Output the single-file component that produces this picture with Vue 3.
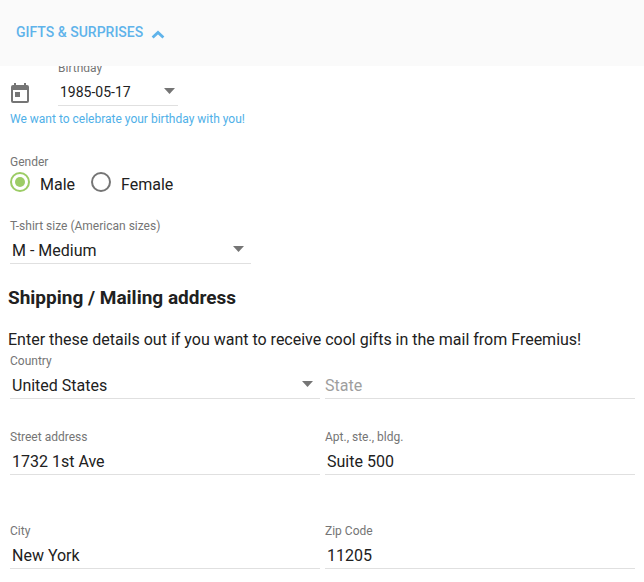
<script setup>
import { ref } from 'vue'

const open = ref(true)
const birthday = ref('1985-05-17')
const gender = ref('male')
const size = ref('M')
const country = ref('US')
const state = ref('')
const street = ref('1732 1st Ave')
const apt = ref('Suite 500')
const city = ref('New York')
const zip = ref('11205')

const genders = [
  { value: 'male', label: 'Male' },
  { value: 'female', label: 'Female' },
]
</script>

<template>
  <main class="page">
    <header class="header">
      <button class="toggle" type="button" :aria-expanded="open" @click="open = !open">
        <span>GIFTS &amp; SURPRISES</span>
        <svg class="chevron" viewBox="0 0 14 9" aria-hidden="true">
          <path d="M1.600 7.600 7 2.400 12.400 7.600" fill="none" stroke="currentColor" stroke-width="2.800" />
        </svg>
      </button>
    </header>

    <form v-if="open" class="form" @submit.prevent>
      <div class="birthday">
        <button class="calendar" type="button" aria-label="Open calendar">
          <svg viewBox="0 0 18 20" aria-hidden="true">
            <path fill="currentColor" d="M3 0h2v2h8V0h2v2h1a2 2 0 0 1 2 2v14a2 2 0 0 1-2 2H2a2 2 0 0 1-2-2V4a2 2 0 0 1 2-2h1zM2 7v11h14V7zM4 9h5v5H4z" />
          </svg>
        </button>
        <div class="field date">
          <label class="label" for="birthday">Birthday</label>
          <div class="control">
            <input id="birthday" v-model="birthday" class="input date-input" type="text" />
            <svg class="arrow" viewBox="0 0 11 6" aria-hidden="true"><path d="M0 0h11L5.500 6z" fill="currentColor" /></svg>
          </div>
        </div>
      </div>
      <p class="hint">We want to celebrate your birthday with you!</p>

      <fieldset class="gender">
        <legend class="label">Gender</legend>
        <div class="radios">
          <label v-for="g in genders" :key="g.value" class="radio">
            <input v-model="gender" type="radio" name="gender" :value="g.value" />
            <span>{{ g.label }}</span>
          </label>
        </div>
      </fieldset>

      <div class="field shirt">
        <label class="label" for="size">T-shirt size (American sizes)</label>
        <div class="control choice">
          <select id="size" v-model="size" class="input">
            <option value="M">M - Medium</option>
          </select>
          <svg class="arrow" viewBox="0 0 11 6" aria-hidden="true"><path d="M0 0h11L5.500 6z" fill="currentColor" /></svg>
        </div>
      </div>

      <h2 class="title">Shipping / Mailing address</h2>
      <p class="intro">Enter these details out if you want to receive cool gifts in the mail from Freemius!</p>

      <div class="row">
        <div class="field">
          <label class="label" for="country">Country</label>
          <div class="control choice">
            <select id="country" v-model="country" class="input">
              <option value="US">United States</option>
            </select>
            <svg class="arrow" viewBox="0 0 11 6" aria-hidden="true"><path d="M0 0h11L5.500 6z" fill="currentColor" /></svg>
          </div>
        </div>
        <div class="field bare">
          <div class="control">
            <input v-model="state" class="input empty" type="text" placeholder="State" aria-label="State" />
          </div>
        </div>
      </div>

      <div class="row street">
        <div class="field">
          <label class="label" for="street">Street address</label>
          <div class="control"><input id="street" v-model="street" class="input" type="text" /></div>
        </div>
        <div class="field">
          <label class="label" for="apt">Apt., ste., bldg.</label>
          <div class="control"><input id="apt" v-model="apt" class="input" type="text" /></div>
        </div>
      </div>

      <div class="row city">
        <div class="field">
          <label class="label" for="city">City</label>
          <div class="control"><input id="city" v-model="city" class="input" type="text" /></div>
        </div>
        <div class="field">
          <label class="label" for="zip">Zip Code</label>
          <div class="control"><input id="zip" v-model="zip" class="input" type="text" /></div>
        </div>
      </div>
    </form>
  </main>
</template>

<style>
body {
  background: #fff;
}
</style>

<style scoped>
.page {
  font-family: Roboto, "Liberation Sans", sans-serif;
  font-size: 16px;
  line-height: 24px;
  color: #212121;
}

.header {
  position: sticky;
  top: 0;
  z-index: 1;
  display: flex;
  align-items: center;
  height: 66px;
  padding: 0 16px 2px;
  box-sizing: border-box;
  background: #fafafa;
}

.toggle {
  display: flex;
  align-items: center;
  gap: 8px;
  padding: 0;
  border: 0;
  background: none;
  font: 500 14px/24px Roboto, "Liberation Sans", sans-serif;
  color: #5fb3ea;
  cursor: pointer;
}

.chevron {
  width: 14px;
  height: 9px;
  margin-top: 5px;
}

/* The first label slides under the sticky header. */
.form {
  margin-top: -6px;
  padding: 0 9px 12px 10px;
}

.label {
  display: block;
  padding: 0;
  font-size: 12px;
  line-height: 16px;
  color: #757575;
}

.control {
  display: flex;
  align-items: center;
  height: 30px;
  padding: 3px 7px 0 2px;
  box-sizing: border-box;
  border-bottom: 1px solid #e0e0e0;
}

.choice {
  padding-top: 5px;
}

.choice .arrow {
  margin-bottom: 4px;
}

.input {
  flex: 1;
  min-width: 0;
  height: 26px;
  padding: 0;
  border: 0;
  outline: 0;
  background: none;
  appearance: none;
  font: inherit;
  color: inherit;
}

.empty::placeholder {
  color: #9e9e9e;
  opacity: 1;
}

.arrow {
  flex: none;
  width: 11px;
  height: 6px;
  margin-bottom: 2px;
  color: #757575;
}

.birthday {
  display: flex;
  align-items: flex-end;
  gap: 28px;
}

.calendar {
  display: flex;
  padding: 0 0 3px;
  border: 0;
  background: none;
  color: #757575;
  cursor: pointer;
}

.calendar svg {
  width: 20px;
  height: 20px;
}

.date {
  width: 120px;
}

.date .control {
  padding-right: 3px;
}

.input.date-input {
  font-size: 14px;
}

.hint {
  margin: 5px 0 0;
  font-size: 12px;
  line-height: 16px;
  color: #4fb0e8;
}

.gender {
  margin: 27px 0 0;
  padding: 0;
  border: 0;
}

.radios {
  display: flex;
  gap: 16px;
  height: 28px;
  align-items: center;
}

.radio {
  display: flex;
  align-items: flex-start;
  gap: 10px;
}

.radio span {
  padding-top: 1px;
}

.radio input {
  display: grid;
  place-content: center;
  width: 20px;
  height: 20px;
  margin: 0;
  box-sizing: border-box;
  border: 2px solid #757575;
  border-radius: 50%;
  appearance: none;
}

.radio input:checked {
  border-color: #9ccc65;
}

.radio input:checked::before {
  content: "";
  width: 10px;
  height: 10px;
  border-radius: 50%;
  background: #9ccc65;
}

.shirt {
  width: 241px;
  margin-top: 20px;
}

.title {
  margin: 22px 0 0 -2px;
  font-size: 19px;
  font-weight: 700;
  line-height: 24px;
}

.intro {
  margin: 18px 0 0 -2px;
}

.row {
  display: grid;
  grid-template-columns: 1fr 1fr;
  align-items: end;
  gap: 5px;
  margin-top: 1px;
}

.bare .control {
  padding-left: 0;
}

.street {
  margin-top: 30px;
}

.city {
  margin-top: 48px;
}
</style>
